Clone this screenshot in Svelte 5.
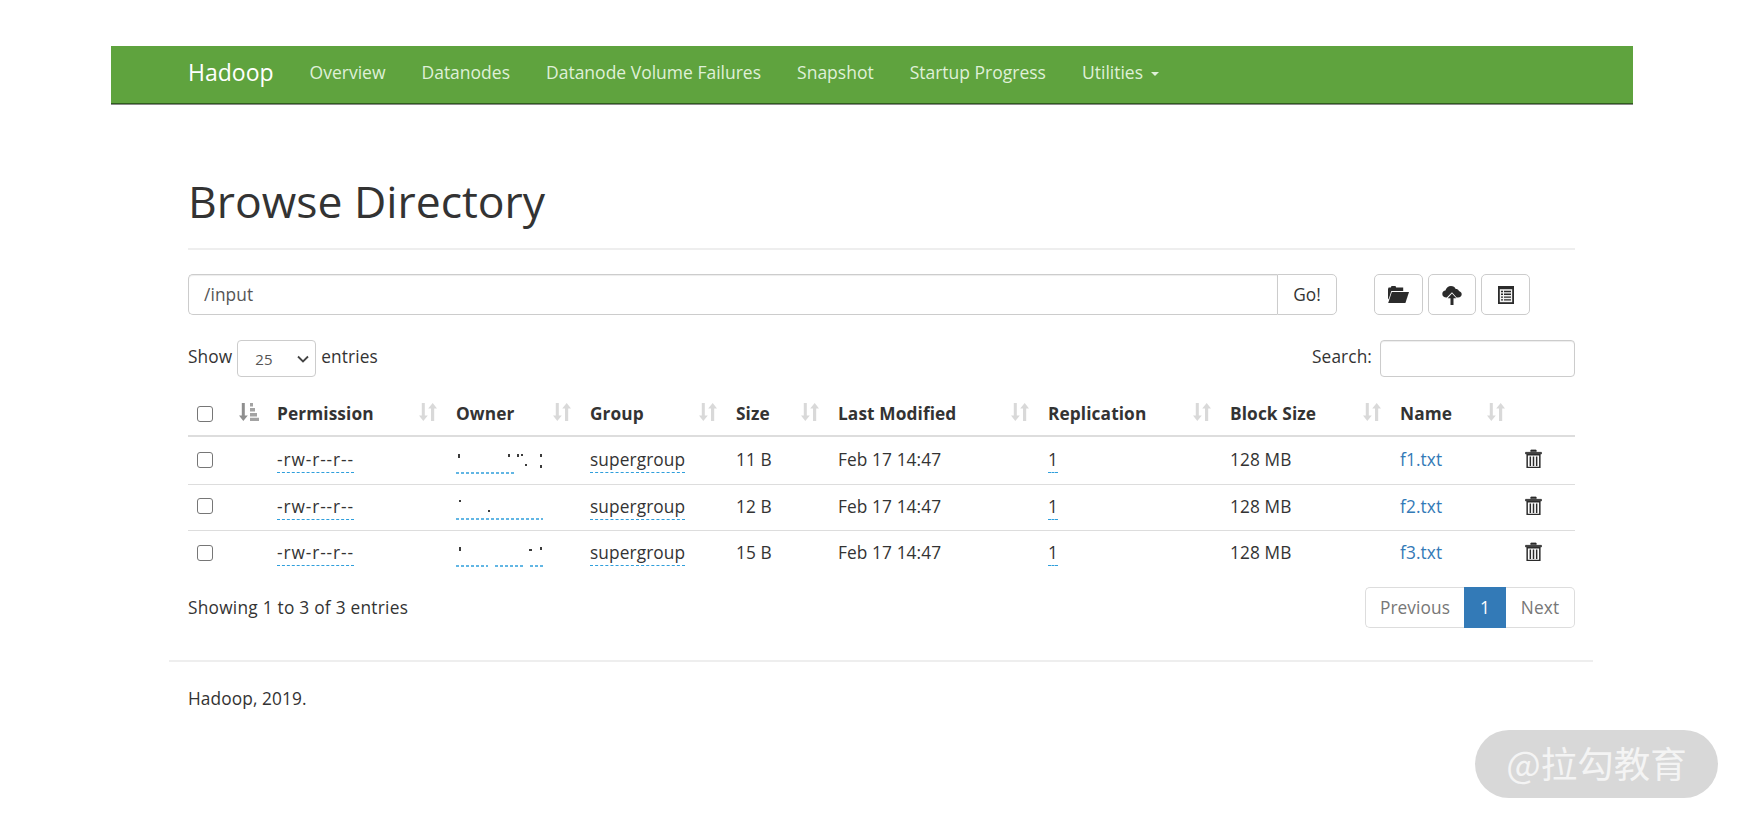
<script>
  const rows = [
    { size: '11 B', name: 'f1.txt', specks: [[2,2,2,4],[52,2,2,3],[61,2,2,3],[65,2,2,2],[84,2,2,3],[69,12,2,2],[84,13,2,3]], lines: [[0,58]] },
    { size: '12 B', name: 'f2.txt', specks: [[3,2,2,2],[32,12,2,2]], lines: [[0,87]] },
    { size: '15 B', name: 'f3.txt', specks: [[3,2,2,4],[84,2,2,3],[73,4,3,2]], lines: [[0,32],[39,30],[74,13]] }
  ];
  const cols = [
    ['Permission', 'perm'], ['Owner', 'owner'], ['Group', 'group'], ['Size', 'size'],
    ['Last Modified', 'mod'], ['Replication', 'rep'], ['Block Size', 'block'], ['Name', 'name']
  ];
</script>

{#snippet sortIcon()}
  <svg class="sort" viewBox="0 0 18 18" width="18" height="18" aria-hidden="true">
    <path d="M2.800 0h3v12.500h3L4.300 18 0 12.500h2.800z" fill="#d9d9d9"/>
    <path d="M12 18V5.500H9.200L13.700 0 18 5.500h-2.800V18z" fill="#d9d9d9"/>
  </svg>
{/snippet}

{#snippet trash()}
  <svg class="trash" viewBox="0 0 16 18" width="17" height="19" aria-hidden="true">
    <path d="M5.500 2.600V1h5v1.600M0.500 3.200h15v1.400H.5z" fill="#2b2b2b" stroke="#2b2b2b" stroke-width=".8"/>
    <path d="M2 5.500h12V17.500H2z" fill="#fff" stroke="#2b2b2b" stroke-width="1.400"/>
    <path d="M5 7v9M8 7v9M11 7v9" stroke="#2b2b2b" stroke-width="1.400"/>
  </svg>
{/snippet}

<div class="page">
  <nav class="navbar">
    <span class="brand">Hadoop</span>
    <a href="#o">Overview</a>
    <a href="#d">Datanodes</a>
    <a href="#f">Datanode Volume Failures</a>
    <a href="#s">Snapshot</a>
    <a href="#p">Startup Progress</a>
    <a href="#u">Utilities <span class="caret"></span></a>
  </nav>

  <main class="content">
    <h1>Browse Directory</h1>

    <div class="pathbar">
      <div class="input-group">
        <div class="path">/input</div>
        <button class="go">Go!</button>
      </div>
      <div class="tools">
        <button class="tool" aria-label="Create directory">
          <svg viewBox="0 0 22 17" width="22" height="17">
            <path d="M1 3l.6-1.600h2.200L4.500 0h4l.7 1.400h7V5H4.300L1.600 13.400 1 12z" fill="#2b2b2b"/>
            <path d="M4.800 6H22l-3.600 11H1.200z" fill="#2b2b2b"/>
          </svg>
        </button>
        <button class="tool" aria-label="Upload">
          <svg viewBox="0 0 20 20" width="20" height="20">
            <path d="M4.500 12.500C2 12.500.3 11 .3 8.900c0-1.900 1.400-3.200 3.100-3.300C4.200 3 6.300 1 9 1c2.300 0 4 1.200 4.700 3 .5-.2 2.800 0 3.200 2 1.500.5 2.800 1.500 2.800 3.200 0 1.800-1.400 3.300-3.700 3.300h-1.400L10 7.200 4.800 12.500z" fill="#2b2b2b"/>
            <path d="M10 8.500l4.300 4.700h-2.800V20h-3v-6.800H5.700z" fill="#2b2b2b"/>
          </svg>
        </button>
        <button class="tool" aria-label="Cut and copy">
          <svg viewBox="0 0 16 18" width="16" height="18">
            <path d="M0 0h16v18H0z" fill="#2b2b2b"/>
            <path d="M1.800 3.200h12.400v13H1.800z" fill="#f4f4f4"/>
            <path d="M3 4.800h2v1.400H3zM6 4.800h7v1.400H6zM3 7.600h2V9H3zM6 7.600h7V9H6zM3 10.400h2v1.400H3zM6 10.400h7v1.400H6zM3 13.200h2v1.400H3zM6 13.200h7v1.400H6z" fill="#2b2b2b"/>
          </svg>
        </button>
      </div>
    </div>

    <div class="controls">
      <label class="show"><span class="lbl">Show</span>
        <span class="select"><span>25</span>
          <svg viewBox="0 0 12 8" width="12" height="8"><path d="M1 1.500l5 5 5-5" fill="none" stroke="#444" stroke-width="1.800"/></svg>
        </span>
        <span class="lbl">entries</span></label>
      <label class="search"><span class="lbl">Search:</span> <span class="search-box"></span></label>
    </div>

    <table>
      <colgroup>
        <col class="c-check"/><col class="c-order"/><col class="c-perm"/><col class="c-owner"/><col class="c-group"/>
        <col class="c-size"/><col class="c-mod"/><col class="c-rep"/><col class="c-block"/><col class="c-name"/><col class="c-del"/>
      </colgroup>
      <thead>
        <tr>
          <th><span class="check"></span></th>
          <th class="order">
            <svg viewBox="0 0 20 18" width="20" height="18" aria-hidden="true">
              <path d="M2.800 0h3v12.500h3L4.300 18 0 12.500h2.800z" fill="#8f8f8f"/>
              <path d="M11 0h3v3.500h-3zM11 5h5v3.500h-5zM11 10h7v3.500h-7zM11 14.800h9V18h-9z" fill="#a3a3a3"/>
            </svg>
          </th>
          {#each cols as [label, key]}
            <th class={key}><div class="th-in"><span>{label}</span>{@render sortIcon()}</div></th>
          {/each}
          <th></th>
        </tr>
      </thead>
      <tbody>
        {#each rows as r}
          <tr>
            <td><span class="check"></span></td>
            <td></td>
            <td><span class="edit mode">-rw-r--r--</span></td>
            <td class="owner-cell">
              <svg viewBox="0 0 88 22" width="88" height="22" aria-label="owner hidden">
                {#each r.specks as [x, y, w, h]}<rect {x} {y} width={w} height={h} fill="#3b3b3b"/>{/each}
                {#each r.lines as [x, w]}<line x1={x} x2={x + w} y1="21" y2="21" stroke="#2f9fdc" stroke-dasharray="3 2" stroke-width="1.400"/>{/each}
              </svg>
            </td>
            <td><span class="edit">supergroup</span></td>
            <td>{r.size}</td>
            <td>Feb 17 14:47</td>
            <td><span class="edit">1</span></td>
            <td>128 MB</td>
            <td><a class="link" href="#n">{r.name}</a></td>
            <td class="del">{@render trash()}</td>
          </tr>
        {/each}
      </tbody>
    </table>

    <div class="table-foot">
      <span class="info">Showing 1 to 3 of 3 entries</span>
      <div class="pager">
        <span class="pg prev">Previous</span>
        <span class="pg active">1</span>
        <span class="pg next">Next</span>
      </div>
    </div>
  </main>

  <footer class="footer">Hadoop, 2019.</footer>

  <div class="watermark">@拉勾教育</div>
</div>

<style>
  :global(body) { margin: 0; background: #fff; }
  .page {
    position: relative;
    height: 822px;
    overflow: hidden;
    padding-top: 46px;
    box-sizing: border-box;
    font-family: "Open Sans", "Noto Sans", sans-serif;
    font-size: 17.300px;
    letter-spacing: .1px;
    color: #333;
  }
  .navbar {
    margin: 0 111px;
    height: 58px;
    box-sizing: border-box;
    background: #5fa33e;
    border-bottom: 1px solid #2f5d1e;
    box-shadow: 0 1px 0 #8a8a8a;
    display: flex;
    align-items: center;
    padding-left: 77px;
    padding-bottom: 5px;
    gap: 36px;
    letter-spacing: 0;
  }
  .navbar a { color: #dff0d8; text-decoration: none; font-size: 17.500px; white-space: nowrap; }
  .brand { color: #fff; font-size: 23px; margin-right: 0; }
  .caret {
    display: inline-block;
    width: 0; height: 0;
    margin-left: 3px;
    vertical-align: middle;
    border-top: 4.500px solid #dff0d8;
    border-left: 4.500px solid transparent;
    border-right: 4.500px solid transparent;
  }
  .content { margin: 0 169px 0 188px; }
  h1 {
    margin: 66px 0 0;
    font-size: 44.500px;
    font-weight: 400;
    line-height: 62px;
    padding-bottom: 16px;
    border-bottom: 2px solid #eee;
    color: #333;
    white-space: nowrap;
    letter-spacing: 0;
  }
  .pathbar { display: flex; margin-top: 24px; height: 41px; }
  .input-group { width: 1149px; display: flex; }
  .path {
    flex: 1;
    border: 1px solid #ccc;
    border-right: 0;
    border-radius: 5px 0 0 5px;
    box-shadow: inset 0 1px 1px rgba(0,0,0,.075);
    padding: 0 15px;
    line-height: 39px;
    color: #555;
  }
  button {
    font: inherit;
    background: #fff;
    border: 1px solid #ccc;
    color: #333;
    padding: 0;
  }
  .go { width: 60px; border-radius: 0 5px 5px 0; }
  .tools { display: flex; gap: 5px; margin-left: 37px; }
  .tool { width: 48.700px; border-radius: 5px; display: flex; align-items: center; justify-content: center; }
  .controls {
    display: flex;
    justify-content: space-between;
    align-items: center;
    margin-top: 25px;
    height: 37px;
  }
  .show, .search { display: flex; align-items: center; white-space: nowrap; }
  .lbl { margin-bottom: 4px; }
  .select {
    width: 79px;
    height: 37px;
    box-sizing: border-box;
    border: 1px solid #ccc;
    border-radius: 4px;
    margin: 0 5px;
    padding: 0 6px 0 17px;
    display: flex;
    align-items: center;
    justify-content: space-between;
    font-size: 15px;
    color: #555;
  }
  .search-box {
    display: block;
    width: 195px;
    height: 37px;
    box-sizing: border-box;
    margin-left: 8px;
    border: 1px solid #ccc;
    border-radius: 4px;
    box-shadow: inset 0 1px 1px rgba(0,0,0,.075);
  }
  table {
    width: 1387px;
    table-layout: fixed;
    border-collapse: collapse;
    margin-top: 11px;
  }
  .c-check { width: 43px; }
  .c-order { width: 36px; }
  .c-perm { width: 179px; }
  .c-owner { width: 134px; }
  .c-group { width: 146px; }
  .c-size { width: 102px; }
  .c-mod { width: 210px; }
  .c-rep { width: 182px; }
  .c-block { width: 170px; }
  .c-name { width: 124px; }
  .c-del { width: 61px; }
  th, td { padding: 0 0 0 10px; text-align: left; white-space: nowrap; }
  th {
    height: 43px;
    font-weight: 700;
    font-size: 17.300px;
    border-bottom: 2px solid #ddd;
    padding-top: 4px;
  }
  td {
    height: 43px;
    padding-bottom: 3px;
    border-top: 1px solid #ddd;
  }
  tbody tr:first-child td { border-top: 0; height: 45px; padding-bottom: 2px; }
  tbody tr:nth-child(2) td { height: 42px; }
  .th-in { display: flex; justify-content: space-between; align-items: center; padding-right: 9px; }
  .sort { display: block; margin-top: -3px; }
  .order svg { display: block; margin: -4px 0 0 -2px; }
  .check {
    display: block;
    width: 14px;
    height: 14px;
    margin-left: -1px;
    border: 1px solid #767676;
    border-radius: 3px;
    background: #fff;
  }
  .edit { border-bottom: 1.400px dashed #2f9fdc; padding-bottom: 1px; }
  .mode { letter-spacing: .9px; }
  .owner-cell svg { display: block; margin-top: 6px; }
  .link { color: #337ab7; text-decoration: none; }
  .del .trash { display: block; margin: -2px 0 0 1px; }
  .table-foot {
    display: flex;
    justify-content: space-between;
    align-items: center;
    margin-top: 10px;
    height: 41px;
  }
  .info { letter-spacing: .25px; }
  .pager {
    display: flex;
    height: 41px;
    box-sizing: border-box;
  }
  .pg {
    display: flex;
    align-items: center;
    justify-content: center;
    box-sizing: border-box;
    border: 1px solid #ddd;
    color: #777;
  }
  .prev { width: 99px; border-radius: 5px 0 0 5px; border-right: 0; }
  .active { width: 42px; background: #337ab7; border-color: #337ab7; color: #fff; }
  .next { width: 69px; border-radius: 0 5px 5px 0; border-left: 0; }
  .footer {
    margin: 32px 151px 0 169px;
    border-top: 2px solid #eee;
    padding: 25px 0 0 19px;
    line-height: 24px;
  }
  .watermark {
    position: absolute;
    left: 1475px;
    top: 730px;
    width: 243px;
    height: 68px;
    border-radius: 34px;
    background: #d8d8d8;
    color: #f4f4f4;
    font-family: "Noto Sans CJK SC", "Noto Sans", sans-serif;
    font-size: 36.500px;
    line-height: 66px;
    text-align: center;
    white-space: nowrap;
    letter-spacing: 0;
  }
</style>
